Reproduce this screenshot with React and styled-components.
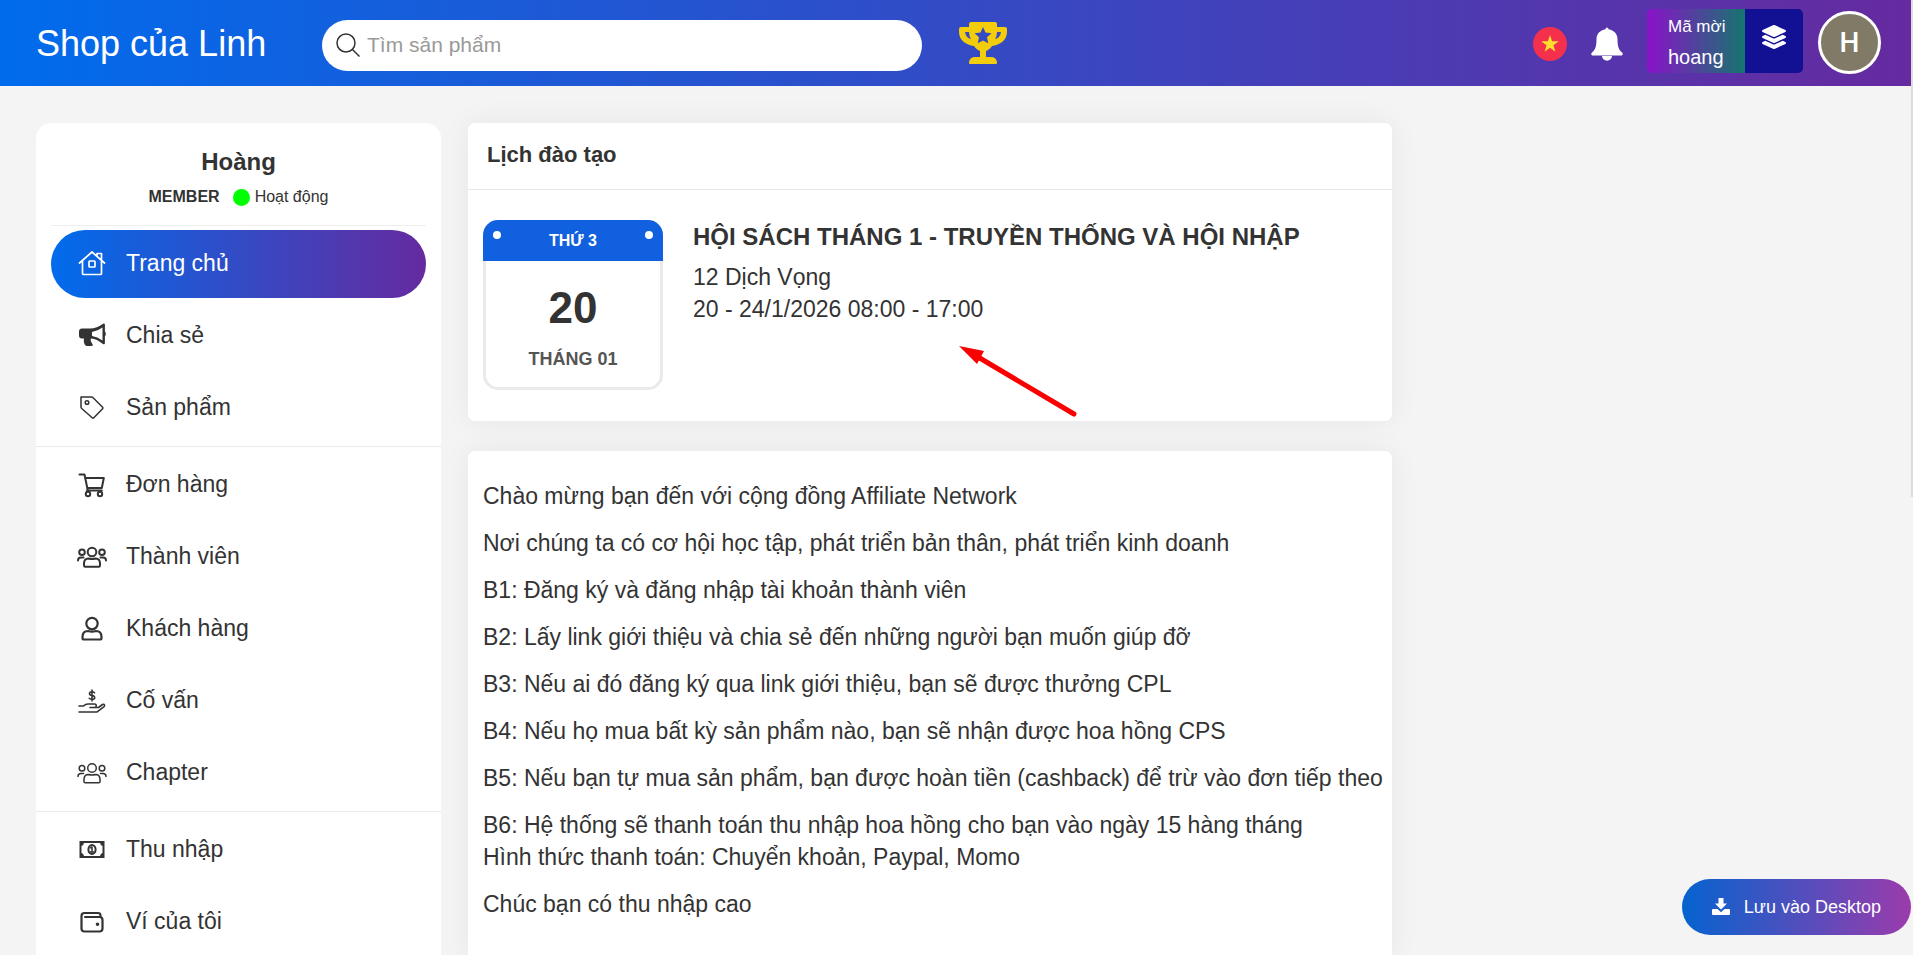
import React from 'react';
import styled, { createGlobalStyle, css } from 'styled-components';
import { FaLayerGroup } from 'react-icons/fa';

const GlobalStyle = createGlobalStyle`
  * {
    box-sizing: border-box;
  }
  html {
    scrollbar-width: none;
  }
  body {
    margin: 0;
    background: #f4f4f4;
    color: #333;
    font-family: 'Liberation Sans', Arial, sans-serif;
    font-size: 23px;
    line-height: 32px;
  }
  h1, h2, h3, p {
    margin: 0;
  }
  a {
    color: inherit;
    text-decoration: none;
  }
  button {
    font-family: inherit;
    border: 0;
    cursor: pointer;
  }
`;

const Page = styled.div`
  height: 100vh;
  display: flex;
  flex-direction: column;
  overflow: hidden;
`;

const Header = styled.header`
  flex: none;
  display: flex;
  align-items: center;
  height: 86px;
  padding: 0 32px 0 36px;
  color: #fff;
  background: linear-gradient(90deg, #006cec, #662a9f);
`;

const Brand = styled.a`
  width: 286px;
  padding-top: 2px;
  font-size: 36px;
  line-height: 44px;
`;

const Search = styled.form`
  display: flex;
  align-items: center;
  gap: 7px;
  width: 600px;
  height: 51px;
  margin-top: 4px;
  padding: 0 14px;
  border-radius: 26px;
  background: #fff;
  color: #333;
`;

const SearchInput = styled.input`
  flex: 1;
  min-width: 0;
  border: 0;
  outline: 0;
  padding: 0;
  background: none;
  font-family: inherit;
  font-size: 21px;
  line-height: 28px;
  &::placeholder {
    color: #999;
    opacity: 1;
  }
`;

const TrophyLink = styled.a`
  display: flex;
  margin-left: 36px;
  color: #f3cc0b;
`;

const HeaderTools = styled.div`
  display: flex;
  align-items: center;
  margin: 0 0 2px auto;
`;

const IconButton = styled.button`
  display: flex;
  padding: 0;
  background: none;
  color: #fff;
  margin: 4px 24px 0 0;
`;

const InviteBox = styled.div`
  display: flex;
  height: 64px;
  margin: 0 15px 2px 0;
  border-radius: 5px;
  overflow: hidden;
`;

const InviteCode = styled.div`
  width: 98px;
  padding: 2px 0 0 21px;
  font-size: 20px;
  line-height: 31px;
  background: linear-gradient(90deg, #8a12c9, #15756f);
  small {
    display: block;
    font-size: 17px;
  }
`;

const InviteCopy = styled.button`
  display: flex;
  justify-content: center;
  width: 58px;
  padding: 16px 0 0;
  color: #fff;
  background: #131193;
`;

const Avatar = styled.button`
  width: 63px;
  height: 63px;
  border: 3px solid #fff;
  border-radius: 50%;
  padding: 0;
  background: #807a67;
  color: #fff;
  font-family: Roboto, sans-serif;
  font-size: 28px;
  font-weight: 500;
`;

const Content = styled.div`
  flex: 1;
  min-height: 0;
  display: flex;
  align-items: flex-start;
  gap: 27px;
  padding: 37px 36px 0;
`;

const Sidebar = styled.aside`
  flex: none;
  width: 405px;
  padding-bottom: 32px;
  border-radius: 15px;
  background: #fff;
`;

const Profile = styled.div`
  margin: 0 15px;
  padding: 23px 0 14px;
  border-bottom: 1px solid #eee;
  text-align: center;
`;

const ProfileName = styled.h2`
  font-size: 24px;
  line-height: 32px;
`;

const ProfileStatus = styled.div`
  display: flex;
  justify-content: center;
  align-items: center;
  gap: 5px;
  margin-top: 5px;
  font-size: 16px;
  line-height: 28px;
  strong {
    margin-right: 8px;
  }
`;

const StatusDot = styled.span`
  width: 17px;
  height: 17px;
  border-radius: 50%;
  background: #0f0;
`;

const NavGroup = styled.nav`
  display: flex;
  flex-direction: column;
  gap: 4px;
  padding: 4px 15px;
  & + & {
    border-top: 1px solid #eaeaea;
  }
`;

const NavItem = styled.a`
  display: flex;
  align-items: center;
  gap: 19px;
  height: 68px;
  padding: 0 26px;
  border-radius: 34px;
  ${({ $active }) =>
    $active &&
    css`
      color: #fff;
      background: linear-gradient(90deg, #006cec, #662a9f);
    `}
`;

const NavLabel = styled.span`
  margin-bottom: 2px;
`;

const Main = styled.main`
  flex: none;
  width: calc(50% + 3px);
  display: flex;
  flex-direction: column;
  gap: 30px;
`;

const Card = styled.section`
  border-radius: 7px;
  background: #fff;
  box-shadow: 0 0 30px rgba(0, 0, 0, 0.06);
`;

const CardTitle = styled.h2`
  padding: 16px 19px 18px;
  border-bottom: 1px solid #e8e8e8;
  font-size: 22px;
  line-height: 32px;
`;

const Event = styled.div`
  position: relative;
  display: flex;
  gap: 30px;
  padding: 30px 15px 31px;
`;

const Calendar = styled.div`
  width: 180px;
  border: 3px solid #eaeaea;
  border-top: 0;
  border-radius: 15px;
  text-align: center;
  font-weight: bold;
`;

const CalendarTop = styled.div`
  display: flex;
  justify-content: space-between;
  height: 41px;
  margin: 0 -3px;
  padding: 0 10px;
  border-radius: 15px 15px 0 0;
  background: #1060df;
  color: #fff;
  font-size: 16px;
  line-height: 41px;
  &::before,
  &::after {
    content: '';
    width: 8px;
    height: 8px;
    margin-top: 11px;
    border-radius: 50%;
    background: #fff;
  }
`;

const CalendarDay = styled.div`
  padding-top: 21px;
  font-size: 44px;
  line-height: 52px;
`;

const CalendarMonth = styled.div`
  padding: 14px 0 17px;
  font-size: 18px;
  line-height: 22px;
  color: #555;
`;

const EventTitle = styled.h3`
  margin-bottom: 8px;
  font-size: 24px;
  line-height: 33px;
`;

const Arrow = styled.svg`
  position: absolute;
  left: 490px;
  top: 154px;
`;

const Guide = styled(Card)`
  display: flex;
  flex-direction: column;
  gap: 15px;
  padding: 29px 4px 40px 15px;
`;

const InstallButton = styled.button`
  position: fixed;
  right: 2px;
  bottom: 20px;
  display: flex;
  align-items: center;
  gap: 14px;
  height: 56px;
  padding: 0 30px;
  border-radius: 28px;
  background: linear-gradient(90deg, #0563cf, #9b3bac);
  color: #fff;
  font-size: 18px;
`;

const ScrollThumb = styled.div`
  position: fixed;
  top: 0;
  right: 0;
  width: 2px;
  height: 52vh;
  background: #dcdce0;
`;

const ICONS = {
  home: (
    <>
      <path d="M2.5 14 15 3l12.500 11M5.500 12v12.500q0 1 1 1h17q1 0 1-1V12M20 7V4.500h4.500V11" />
      <rect x="12" y="12" width="6" height="6" rx=".7" />
    </>
  ),
  bullhorn: (
    <>
      <path
        d="M26.500 2.500c1 0 1.400.5 1.400 1.400v6.600c1.300.8 1.300 4 0 4.800v6.700c0 1.200-1 1.600-2 .9-4.500-3.500-7.500-5-12-5.400-.8 2 .6 4 1.500 5.500.7 1.100.4 2-.8 2H9.700c-2 0-3.400-4-2.700-7.500H5c-2 0-3-1.200-3-3v-4c0-1.800 1.200-3 3-3h8c5 0 8.500-1.700 13.500-5z"
        fill="currentColor"
        stroke="none"
      />
      <path d="M25.500 6.500v13q-5-3.700-10.500-4.500V11q5.500-.8 10.500-4.500z" fill="#fff" stroke="none" />
    </>
  ),
  tag: (
    <>
      <path d="M4 4h10.500q.9 0 1.600.7l9.500 9.500q.8.800 0 1.600l-8.800 8.900q-.8.800-1.600 0L4.700 15.500Q4 14.800 4 14z" />
      <circle cx="10" cy="9.500" r="1.800" />
    </>
  ),
  cart: (
    <>
      <path d="M2.500 4.500h5l3.300 16h14M8 8h18.800l-2 10H10.200M11 18 10 21" />
      <circle cx="11" cy="24" r="2.200" />
      <circle cx="23" cy="24" r="2.200" />
    </>
  ),
  users: (
    <>
      <circle cx="15" cy="10" r="4.300" />
      <circle cx="5" cy="10.200" r="2.800" />
      <circle cx="25" cy="10.200" r="2.800" />
      <path d="M7 23.500v-2q0-5 4.500-5 3.500 1 7 0 4.500 0 4.500 5v2q0 1.200-1.200 1.200H8.200Q7 24.700 7 23.500M1 18.500q0-3 3-3h2.500M29 18.500q0-3-3-3h-2.500" />
    </>
  ),
  user: (
    <>
      <circle cx="15" cy="9.600" r="5.700" />
      <path d="M5.500 24v-1q0-6 5.500-6 4 1.300 8 0 5.500 0 5.500 6v1q0 1.500-1.500 1.500H7q-1.500 0-1.500-1.500z" />
    </>
  ),
  hand: (
    <g transform="translate(0 1.5)">
      <path d="M2 18.500h4.500q2-2 4.500-2h6.500q1.800 0 1.800 1.700t-1.800 1.800H13M18.500 20h3l4-3q1.700-.8 2 .4.300 1-.7 1.900l-6 4.500q-.8.700-1.800.7H2" />
      <path d="M17.500 5.300q-1-1-2.500-1-2.500 0-2.500 1.700T15 8t2.700 2-2.700 1.900q-1.700 0-2.800-1.100M15 2.500v11" />
    </g>
  ),
  money: (
    <>
      <path fillRule="evenodd" fill="currentColor" stroke="none" d="M2.500 6h25v17h-25zM7 8q-.5 2.500-2.500 3v7q2 .5 2.500 3h16q.5-2.500 2.500-3v-7q-2-.5-2.500-3z" />
      <ellipse cx="15" cy="14.500" rx="3.600" ry="4.600" />
      <path d="m13.500 12.800 1.500-.8v5M13.200 17h3.600" strokeWidth="1.500" />
    </>
  ),
  wallet: (
    <g transform="translate(0 1)">
      <path d="M23.500 9V7.500q0-2.500-2.500-2.500H7.500Q4.500 5 4.500 8v12.500q0 3 3 3h15q3 0 3-3V12q0-3-3-3H8" />
      <circle cx="20.500" cy="16.200" r=".7" fill="currentColor" />
    </g>
  ),
};

const Icon = ({ name, weight = 2 }) => (
  <svg
    width="30"
    height="30"
    viewBox="0 0 30 30"
    fill="none"
    stroke="currentColor"
    strokeWidth={weight}
    strokeLinejoin="round"
    strokeLinecap="round"
    aria-hidden="true"
  >
    {ICONS[name]}
  </svg>
);

const navGroups = [
  [
    { label: 'Trang chủ', icon: 'home', weight: 1.7, active: true },
    { label: 'Chia sẻ', icon: 'bullhorn' },
    { label: 'Sản phẩm', icon: 'tag', weight: 1.5 },
  ],
  [
    { label: 'Đơn hàng', icon: 'cart' },
    { label: 'Thành viên', icon: 'users' },
    { label: 'Khách hàng', icon: 'user', weight: 2.2 },
    { label: 'Cố vấn', icon: 'hand', weight: 1.6 },
    { label: 'Chapter', icon: 'users', weight: 1.5 },
  ],
  [
    { label: 'Thu nhập', icon: 'money' },
    { label: 'Ví của tôi', icon: 'wallet', weight: 2.2 },
  ],
];

const guideLines = [
  'Chào mừng bạn đến với cộng đồng Affiliate Network',
  'Nơi chúng ta có cơ hội học tập, phát triển bản thân, phát triển kinh doanh',
  'B1: Đăng ký và đăng nhập tài khoản thành viên',
  'B2: Lấy link giới thiệu và chia sẻ đến những người bạn muốn giúp đỡ',
  'B3: Nếu ai đó đăng ký qua link giới thiệu, bạn sẽ được thưởng CPL',
  'B4: Nếu họ mua bất kỳ sản phẩm nào, bạn sẽ nhận được hoa hồng CPS',
  'B5: Nếu bạn tự mua sản phẩm, bạn được hoàn tiền (cashback) để trừ vào đơn tiếp theo',
];

const TopBar = () => (
  <Header>
    <Brand href="#">Shop của Linh</Brand>
    <Search role="search">
      <svg width="24" height="24" viewBox="0 0 24 24" fill="none" stroke="#333" strokeWidth="1.5" aria-hidden="true">
        <circle cx="10" cy="10" r="9" />
        <path d="m16.500 16.500 7 7" />
      </svg>
      <SearchInput type="search" placeholder="Tìm sản phẩm" aria-label="Tìm sản phẩm" />
    </Search>
    <TrophyLink href="#" aria-label="Xếp hạng">
      <svg width="50" height="44" viewBox="0 0 50 44" aria-hidden="true">
        <path
          fill="currentColor"
          fillRule="evenodd"
          d="M13 1h24q2 0 2 2v3h8q2 0 2 2v3c0 8-7 13-15 14-2 3-4 4-6 5v6h5q5 0 6 5v1q0 1-1 1H12q-1 0-1-1v-1q1-5 6-5h5v-6c-2-1-4-2-6-5C8 24 1 19 1 11V8q0-2 2-2h8V3q0-2 2-2zM7 11q1 6 6 7-2-3-2-7zm32 0q0 4-2 7 5-1 6-7zM25 6l-2.500 5.500-6 .7 4.500 4.100-1.200 6L25 19.400l5.200 2.900-1.200-6 4.500-4.100-6-.7z"
        />
      </svg>
    </TrophyLink>
    <HeaderTools>
      <IconButton type="button" aria-label="Tiếng Việt">
        <svg width="34" height="34" viewBox="0 0 34 34">
          <circle cx="17" cy="17" r="17" fill="#f5304c" />
          <path fill="#ffde2e" d="m17 8 2.100 6.300h6.700l-5.400 4 2 6.400-5.400-3.900-5.400 3.900 2-6.400-5.400-4h6.700z" />
        </svg>
      </IconButton>
      <IconButton type="button" aria-label="Thông báo">
        <svg width="32" height="34" viewBox="0 0 32 34" fill="currentColor">
          <path d="M14.500 2.200q0-1.700 1.500-1.700t1.500 1.700C23 3 26.500 7 26.500 12c0 8 1.500 11 4.500 13.500 1.500 1.300.5 3-.8 3H1.800c-1.300 0-2.300-1.700-.8-3C4 23 5.500 20 5.500 12c0-5 3.500-9 9-9.800zM11 29h10a5 4.700 0 0 1-10 0z" />
        </svg>
      </IconButton>
      <InviteBox>
        <InviteCode>
          <small>Mã mời</small>
          hoang
        </InviteCode>
        <InviteCopy type="button" aria-label="Sao chép mã mời">
          <FaLayerGroup size={24} />
        </InviteCopy>
      </InviteBox>
      <Avatar type="button">H</Avatar>
    </HeaderTools>
  </Header>
);

const SideMenu = () => (
  <Sidebar>
    <Profile>
      <ProfileName>Hoàng</ProfileName>
      <ProfileStatus>
        <strong>MEMBER</strong>
        <StatusDot />
        Hoạt động
      </ProfileStatus>
    </Profile>
    {navGroups.map((group) => (
      <NavGroup key={group[0].label}>
        {group.map((item) => (
          <NavItem key={item.label} href="#" $active={item.active}>
            <Icon name={item.icon} weight={item.weight} />
            <NavLabel>{item.label}</NavLabel>
          </NavItem>
        ))}
      </NavGroup>
    ))}
  </Sidebar>
);

const TrainingCard = () => (
  <Card>
    <CardTitle>Lịch đào tạo</CardTitle>
    <Event>
      <Calendar>
        <CalendarTop>THỨ 3</CalendarTop>
        <CalendarDay>20</CalendarDay>
        <CalendarMonth>THÁNG 01</CalendarMonth>
      </Calendar>
      <div>
        <EventTitle>HỘI SÁCH THÁNG 1 - TRUYỀN THỐNG VÀ HỘI NHẬP</EventTitle>
        <p>12 Dịch Vọng</p>
        <p>20 - 24/1/2026 08:00 - 17:00</p>
      </div>
      <Arrow width="122" height="74" viewBox="0 0 122 74" aria-hidden="true">
        <path d="m20 13 96 57" stroke="#fa0000" strokeWidth="5" strokeLinecap="round" />
        <path d="m1 2 25 5-7 13z" fill="#fa0000" />
      </Arrow>
    </Event>
  </Card>
);

const App = () => (
  <Page>
    <GlobalStyle />
    <TopBar />
    <Content>
      <SideMenu />
      <Main>
        <TrainingCard />
        <Guide>
          {guideLines.map((line) => (
            <p key={line}>{line}</p>
          ))}
          <p>
            B6: Hệ thống sẽ thanh toán thu nhập hoa hồng cho bạn vào ngày 15 hàng tháng
            <br />
            Hình thức thanh toán: Chuyển khoản, Paypal, Momo
          </p>
          <p>Chúc bạn có thu nhập cao</p>
        </Guide>
      </Main>
    </Content>
    <InstallButton type="button">
      <svg width="18" height="18" viewBox="0 0 18 18" fill="currentColor" aria-hidden="true">
        <path d="M6.500 0h5v5.500H15l-6 6-6-6h3.500z" />
        <path d="M1 11h4.500L9 14.300l3.500-3.300H17q1 0 1 1v4q0 1-1 1H1q-1 0-1-1v-4q0-1 1-1z" />
      </svg>
      Lưu vào Desktop
    </InstallButton>
    <ScrollThumb />
  </Page>
);

export default App;
